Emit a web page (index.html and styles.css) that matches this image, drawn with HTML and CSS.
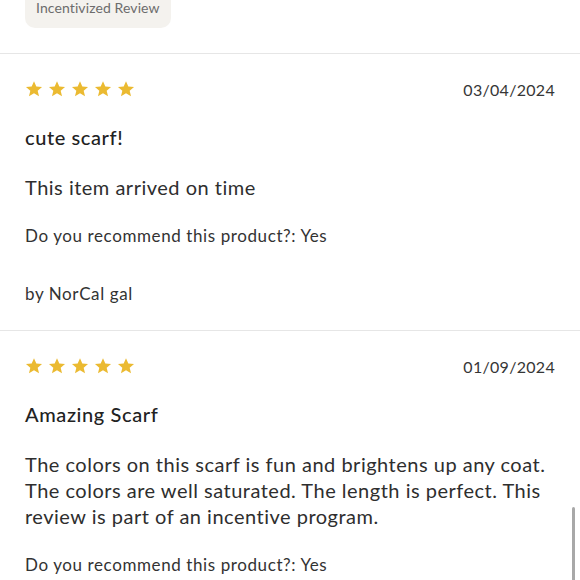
FILE: index.html
```html
<!DOCTYPE html>
<html lang="en">
<head>
<meta charset="utf-8">
<link rel="stylesheet" href="styles.css">
</head>
<body>
<div class="page">
  <section class="top">
    <span class="badge">Incentivized Review</span>
  </section>

  <article class="review">
    <div class="head">
      <div class="stars">
        <svg viewBox="0 0 24 24"><path d="M12 1.5l3.1 7.1 7.6.7-5.8 5 1.8 7.5L12 17.8l-6.7 4 1.8-7.5-5.8-5 7.6-.7z"/></svg>
        <svg viewBox="0 0 24 24"><path d="M12 1.5l3.1 7.1 7.6.7-5.8 5 1.8 7.5L12 17.8l-6.7 4 1.8-7.5-5.8-5 7.6-.7z"/></svg>
        <svg viewBox="0 0 24 24"><path d="M12 1.5l3.1 7.1 7.6.7-5.8 5 1.8 7.5L12 17.8l-6.7 4 1.8-7.5-5.8-5 7.6-.7z"/></svg>
        <svg viewBox="0 0 24 24"><path d="M12 1.5l3.1 7.1 7.6.7-5.8 5 1.8 7.5L12 17.8l-6.7 4 1.8-7.5-5.8-5 7.6-.7z"/></svg>
        <svg viewBox="0 0 24 24"><path d="M12 1.5l3.1 7.1 7.6.7-5.8 5 1.8 7.5L12 17.8l-6.7 4 1.8-7.5-5.8-5 7.6-.7z"/></svg>
      </div>
      <span class="date">03/04/2024</span>
    </div>
    <h3 class="title">cute scarf!</h3>
    <p class="body">This item arrived on time</p>
    <p class="rec">Do you recommend this product?: Yes</p>
    <p class="author">by NorCal gal</p>
  </article>

  <article class="review last">
    <div class="head">
      <div class="stars">
        <svg viewBox="0 0 24 24"><path d="M12 1.5l3.1 7.1 7.6.7-5.8 5 1.8 7.5L12 17.8l-6.7 4 1.8-7.5-5.8-5 7.6-.7z"/></svg>
        <svg viewBox="0 0 24 24"><path d="M12 1.5l3.1 7.1 7.6.7-5.8 5 1.8 7.5L12 17.8l-6.7 4 1.8-7.5-5.8-5 7.6-.7z"/></svg>
        <svg viewBox="0 0 24 24"><path d="M12 1.5l3.1 7.1 7.6.7-5.8 5 1.8 7.5L12 17.8l-6.7 4 1.8-7.5-5.8-5 7.6-.7z"/></svg>
        <svg viewBox="0 0 24 24"><path d="M12 1.5l3.1 7.1 7.6.7-5.8 5 1.8 7.5L12 17.8l-6.7 4 1.8-7.5-5.8-5 7.6-.7z"/></svg>
        <svg viewBox="0 0 24 24"><path d="M12 1.5l3.1 7.1 7.6.7-5.8 5 1.8 7.5L12 17.8l-6.7 4 1.8-7.5-5.8-5 7.6-.7z"/></svg>
      </div>
      <span class="date">01/09/2024</span>
    </div>
    <h3 class="title">Amazing Scarf</h3>
    <p class="body">The colors on this scarf is fun and brightens up any coat. The colors are well saturated. The length is perfect. This review is part of an incentive program.</p>
    <p class="rec">Do you recommend this product?: Yes</p>
  </article>
</div>
<div class="scrollbar"></div>
</body>
</html>
```

FILE: styles.css
```css
html, body {
  margin: 0;
  padding: 0;
  background: #ffffff;
  overflow: hidden;
}
body {
  font-family: Lato, "Noto Sans", sans-serif;
  color: #2a2a2a;
}
.page {
  width: 580px;
}
.top {
  padding: 0 25px 25px;
  border-bottom: 1px solid #e6e6e6;
}
.badge {
  display: block;
  width: fit-content;
  margin-top: -12px;
  padding: 10px 11px;
  line-height: 20px;
  font-size: 14px;
  color: #6c6c6c;
  background: #f4f2ee;
  border-radius: 10px;
  letter-spacing: 0.1px;
}
.review {
  padding: 24px 25px 25px;
  border-bottom: 1px solid #e6e6e6;
}
.review.last {
  border-bottom: none;
}
.head {
  display: flex;
  justify-content: space-between;
  align-items: center;
  height: 22px;
}
.stars {
  display: flex;
  gap: 5px;
}
.stars svg {
  width: 18px;
  height: 18px;
  fill: #ebba31;
}
.date {
  font-size: 16px;
  color: #363636;
  letter-spacing: 0.3px;
}
.title {
  margin: 25px 0 0;
  font-size: 20px;
  line-height: 24px;
  font-weight: 500;
  color: #222;
  letter-spacing: 0.6px;
}
.body {
  margin: 25px 0 0;
  font-size: 20px;
  line-height: 26px;
  color: #2e2e2e;
  letter-spacing: 0.5px;
}
.rec {
  margin: 25px 0 0;
  font-size: 17px;
  line-height: 22px;
  color: #333;
  letter-spacing: 0.6px;
}
.author {
  margin: 36px 0 0;
  font-size: 17px;
  line-height: 22px;
  color: #333;
  letter-spacing: 0.6px;
}
.scrollbar {
  position: fixed;
  right: 5px;
  top: 507px;
  width: 3px;
  height: 90px;
  border-radius: 2px;
  background: #a8a8a8;
}
```
